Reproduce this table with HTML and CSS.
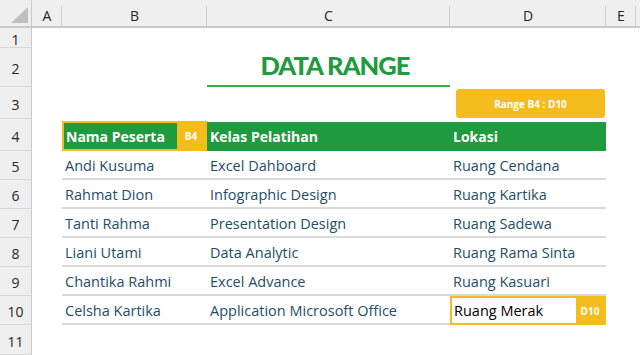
FILE: index.html
```html
<!DOCTYPE html>
<html>
<head>
<meta charset="utf-8">
<link rel="stylesheet" href="styles.css">
</head>
<body>
<div class="sheet">
  <div class="corner"><span class="tri"></span></div>
  <div class="colhead">A</div>
  <div class="colhead">B</div>
  <div class="colhead">C</div>
  <div class="colhead">D</div>
  <div class="colhead">E</div>
  <div class="colhead last"></div>

  <div class="rowhead">1</div>
  <div class="blank span6"></div>

  <div class="rowhead">2</div>
  <div class="blank span2"></div>
  <div class="title">DATA RANGE</div>
  <div class="blank span3"></div>

  <div class="rowhead">3</div>
  <div class="blank span3"></div>
  <div class="btncell"><div class="btn">Range B4 : D10</div></div>
  <div class="blank span2"></div>

  <div class="rowhead">4</div>
  <div class="blank"></div>
  <div class="hcell sel"><span class="htext">Nama Peserta</span><span class="badge">B4</span></div>
  <div class="hcell">Kelas Pelatihan</div>
  <div class="hcell">Lokasi</div>
  <div class="blank span2"></div>

  <div class="rowhead">5</div>
  <div class="blank"></div>
  <div class="dcell">Andi Kusuma</div>
  <div class="dcell">Excel Dahboard</div>
  <div class="dcell">Ruang Cendana</div>
  <div class="blank span2"></div>

  <div class="rowhead">6</div>
  <div class="blank"></div>
  <div class="dcell">Rahmat Dion</div>
  <div class="dcell">Infographic Design</div>
  <div class="dcell">Ruang Kartika</div>
  <div class="blank span2"></div>

  <div class="rowhead">7</div>
  <div class="blank"></div>
  <div class="dcell">Tanti Rahma</div>
  <div class="dcell">Presentation Design</div>
  <div class="dcell">Ruang Sadewa</div>
  <div class="blank span2"></div>

  <div class="rowhead">8</div>
  <div class="blank"></div>
  <div class="dcell">Liani Utami</div>
  <div class="dcell">Data Analytic</div>
  <div class="dcell">Ruang Rama Sinta</div>
  <div class="blank span2"></div>

  <div class="rowhead">9</div>
  <div class="blank"></div>
  <div class="dcell">Chantika Rahmi</div>
  <div class="dcell">Excel Advance</div>
  <div class="dcell">Ruang Kasuari</div>
  <div class="blank span2"></div>

  <div class="rowhead">10</div>
  <div class="blank"></div>
  <div class="dcell">Celsha Kartika</div>
  <div class="dcell">Application Microsoft Office</div>
  <div class="dcell selcell"><span class="stext">Ruang Merak</span><span class="badge">D10</span></div>
  <div class="blank span2"></div>

  <div class="rowhead">11</div>
  <div class="blank span6"></div>
</div>
</body>
</html>
```
FILE: styles.css
```css
html, body {
  margin: 0;
  padding: 0;
  background: #ffffff;
}
body {
  width: 640px;
  height: 355px;
  overflow: hidden;
  font-family: "Open Sans", "Noto Sans", sans-serif;
}
.sheet {
  display: grid;
  grid-template-columns: 32px 30px 145px 243px 156px 30px 4px;
  grid-template-rows: 28px 20px 39px 32px 32px repeat(6, 29px) 30px;
}
.corner {
  background: #efefef;
  border-right: 1px solid #c9c9c9;
  border-bottom: 2px solid #c9c9c9;
  box-sizing: border-box;
  position: relative;
}
.tri {
  position: absolute;
  right: 3px;
  bottom: 3px;
  width: 0;
  height: 0;
  border-left: 17px solid transparent;
  border-bottom: 16px solid #bfbfbf;
}
.colhead {
  background: #efefef;
  border-bottom: 2px solid #c9c9c9;
  box-sizing: border-box;
  display: flex;
  align-items: center;
  justify-content: center;
  font-size: 14px;
  color: #262626;
  padding-top: 5px;
  position: relative;
}
.colhead::after {
  content: "";
  position: absolute;
  right: 0;
  top: 6px;
  bottom: 0;
  width: 1px;
  background: #cfcfcf;
}
.colhead.last::after { display: none; }
.rowhead {
  grid-column: 1;
  background: #efefef;
  border-right: 1px solid #c9c9c9;
  border-bottom: 1px solid #d6d6d6;
  box-sizing: border-box;
  display: flex;
  align-items: center;
  justify-content: center;
  font-size: 14px;
  color: #262626;
  padding-top: 3px;
}
.span2 { grid-column: span 2; }
.span3 { grid-column: span 3; }
.span6 { grid-column: span 6; }
.title {
  color: #1f9a3f;
  font-family: "Lato", "Open Sans", sans-serif;
  font-weight: 900;
  font-size: 25.5px;
  letter-spacing: -1px;
  display: flex;
  align-items: flex-end;
  justify-content: center;
  border-bottom: 2px solid #3aae4c;
  box-sizing: border-box;
  padding-bottom: 5px;
  padding-left: 13px;
}
.btncell {
  display: flex;
  justify-content: flex-end;
  align-items: flex-start;
  padding-top: 2px;
  padding-right: 1px;
}
.btn {
  width: 149px;
  height: 29px;
  background: #f4bc1d;
  border-radius: 3px;
  color: #ffffff;
  font-weight: 700;
  font-size: 10px;
  display: flex;
  align-items: center;
  justify-content: center;
}
.hcell {
  background: #1f9a3f;
  color: #ffffff;
  font-weight: 700;
  font-size: 14px;
  display: flex;
  align-items: center;
  padding-left: 3px;
  margin-top: 3px;
}
.hcell.sel {
  padding: 0;
  border: 2px solid #f4bc1d;
  box-sizing: border-box;
  margin-top: 2px;
  align-items: stretch;
}
.htext {
  flex: 1;
  display: flex;
  align-items: center;
  padding-left: 2px;
}
.badge {
  width: 28px;
  background: #f4bc1d;
  color: #ffffff;
  font-weight: 700;
  font-size: 10px;
  display: flex;
  align-items: center;
  justify-content: center;
}
.dcell {
  color: #1e4e69;
  font-size: 14.5px;
  display: flex;
  align-items: center;
  padding-left: 3px;
  padding-top: 1px;
  border-bottom: 2px solid #dadada;
  box-sizing: border-box;
}
.dcell.selcell {
  padding: 0;
  border: 2px solid #f4bc1d;
  align-items: stretch;
}
.stext {
  flex: 1;
  display: flex;
  align-items: center;
  padding-left: 2px;
  color: #000000;
}
```
